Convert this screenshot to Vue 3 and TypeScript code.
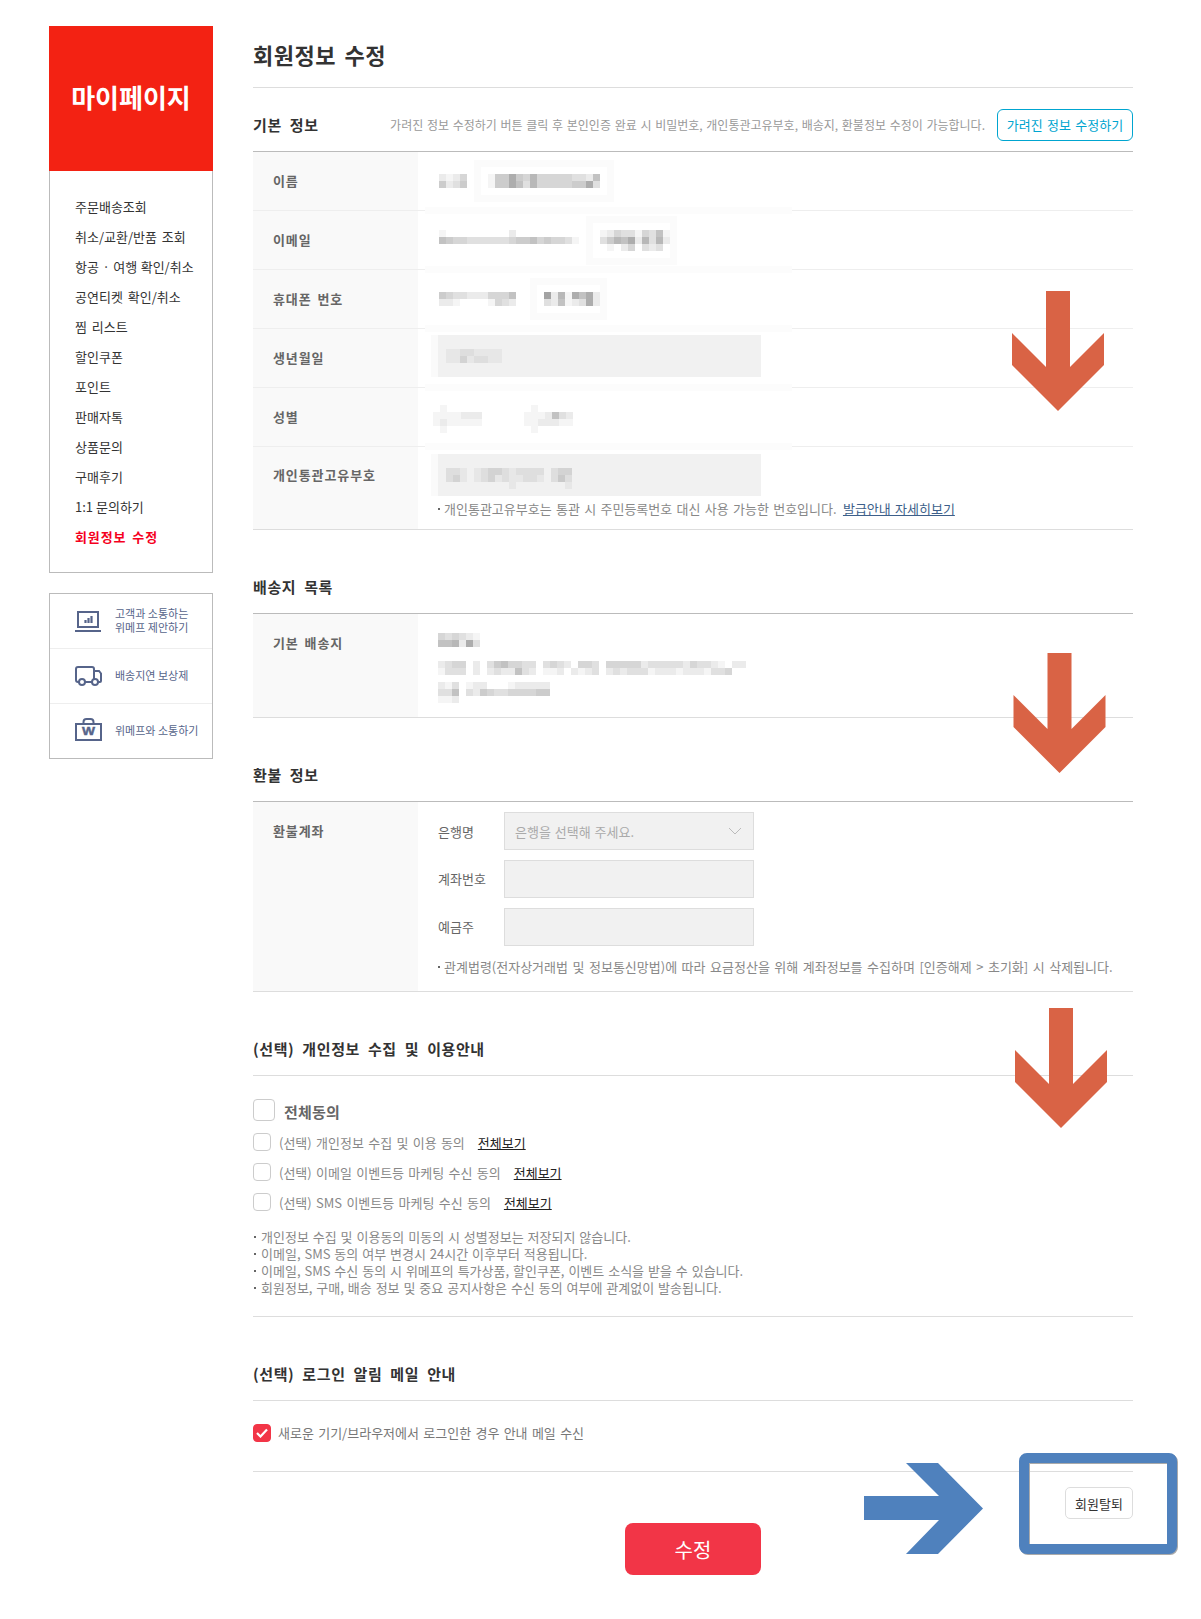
<template>
  <div class="page">
    <aside class="side">
      <div class="side-head">마이페이지</div>
      <ul class="side-menu">
        <li v-for="m in menu" :key="m" :class="{ on: m === '회원정보 수정' }">{{ m }}</li>
      </ul>
      <div class="side-links">
        <div class="side-link">
          <svg width="28" height="24" viewBox="0 0 28 24" fill="none" stroke="#56648a">
            <rect x="3" y="3" width="20" height="15" stroke-width="2" />
            <path d="M0 22h26" stroke-width="2" />
            <path d="M10.500 14v-3M13.500 14V9M16.500 14V7" stroke-width="2.200" />
          </svg>
          <span>고객과 소통하는<br />위메프 제안하기</span>
        </div>
        <div class="side-link">
          <svg width="28" height="24" viewBox="0 0 28 24" fill="none" stroke="#56648a" stroke-width="2">
            <path d="M4 18H3a2 2 0 0 1-2-2V5a2 2 0 0 1 2-2h14a2 2 0 0 1 2 2v10M10 18h7M20 7h4l2 2.500V17a1 1 0 0 1-1 1h-2" />
            <circle cx="7" cy="18" r="3" />
            <circle cx="20" cy="18" r="3" />
          </svg>
          <span>배송지연 보상제</span>
        </div>
        <div class="side-link">
          <svg width="28" height="26" viewBox="0 0 28 26" fill="none" stroke="#56648a" stroke-width="2">
            <rect x="1" y="6" width="25" height="16" />
            <path d="M8.500 5V4a3 3 0 0 1 3-3h4a3 3 0 0 1 3 3v1" />
            <text x="13.500" y="17" text-anchor="middle" textLength="13" lengthAdjust="spacingAndGlyphs" class="w-mark">W</text>
          </svg>
          <span>위메프와 소통하기</span>
        </div>
      </div>
    </aside>

    <main class="main">
      <h1 class="title">회원정보 수정</h1>

      <section class="first">
        <div class="sec-head">
          <h2>기본 정보</h2>
          <p class="sec-desc">가려진 정보 수정하기 버튼 클릭 후 본인인증 완료 시 비밀번호, 개인통관고유부호, 배송지, 환불정보 수정이 가능합니다.</p>
          <button class="btn-unmask">가려진 정보 수정하기</button>
        </div>
        <div class="table">
          <div class="row">
            <div class="th">이름</div>
            <div class="td masked gap-21">
              <span class="mosaic"><span v-for="(r, i) in masks.name1" :key="i" class="m-row"><i v-for="(c, j) in r" :key="j" :style="shade(c)"></i></span></span>
              <span class="halo"><span class="mosaic"><span v-for="(r, i) in masks.name2" :key="i" class="m-row"><i v-for="(c, j) in r" :key="j" :style="shade(c)"></i></span></span></span>
            </div>
          </div>
          <div class="row">
            <div class="th">이메일</div>
            <div class="td masked gap-21">
              <span class="mosaic lift"><span v-for="(r, i) in masks.email1" :key="i" class="m-row"><i v-for="(c, j) in r" :key="j" :style="shade(c)"></i></span></span>
              <span class="halo tight"><span class="mosaic"><span v-for="(r, i) in masks.email2" :key="i" class="m-row"><i v-for="(c, j) in r" :key="j" :style="shade(c)"></i></span></span></span>
            </div>
          </div>
          <div class="row">
            <div class="th">휴대폰 번호</div>
            <div class="td masked gap-28">
              <span class="mosaic"><span v-for="(r, i) in masks.phone1" :key="i" class="m-row"><i v-for="(c, j) in r" :key="j" :style="shade(c)"></i></span></span>
              <span class="halo tight"><span class="mosaic"><span v-for="(r, i) in masks.phone2" :key="i" class="m-row"><i v-for="(c, j) in r" :key="j" :style="shade(c)"></i></span></span></span>
            </div>
          </div>
          <div class="row">
            <div class="th">생년월일</div>
            <div class="td masked td-birth">
              <div class="fake-input">
                <span class="mosaic"><span v-for="(r, i) in masks.birth" :key="i" class="m-row"><i v-for="(c, j) in r" :key="j" :style="shade(c)"></i></span></span>
              </div>
            </div>
          </div>
          <div class="row">
            <div class="th">성별</div>
            <div class="td masked gap-42 td-gender">
              <span class="mosaic"><span v-for="(r, i) in masks.gender1" :key="i" class="m-row"><i v-for="(c, j) in r" :key="j" :style="shade(c)"></i></span></span>
              <span class="mosaic"><span v-for="(r, i) in masks.gender2" :key="i" class="m-row"><i v-for="(c, j) in r" :key="j" :style="shade(c)"></i></span></span>
            </div>
          </div>
          <div class="row row-customs">
            <div class="th th-customs">개인통관고유부호</div>
            <div class="td masked td-customs">
              <div class="fake-input">
                <span class="mosaic drop"><span v-for="(r, i) in masks.customs" :key="i" class="m-row"><i v-for="(c, j) in r" :key="j" :style="shade(c)"></i></span></span>
              </div>
              <p class="note">개인통관고유부호는 통관 시 주민등록번호 대신 사용 가능한 번호입니다. <a class="guide">발급안내 자세히보기</a></p>
            </div>
          </div>
        </div>
      </section>

      <section>
        <div class="sec-head"><h2>배송지 목록</h2></div>
        <div class="table">
          <div class="row row-addr">
            <div class="th th-top">기본 배송지</div>
            <div class="td td-addr">
              <span class="mosaic"><span v-for="(r, i) in masks.addr1" :key="i" class="m-row"><i v-for="(c, j) in r" :key="j" :style="shade(c)"></i></span></span>
              <span class="mosaic"><span v-for="(r, i) in masks.addr2" :key="i" class="m-row"><i v-for="(c, j) in r" :key="j" :style="shade(c)"></i></span></span>
              <span class="mosaic"><span v-for="(r, i) in masks.addr3" :key="i" class="m-row"><i v-for="(c, j) in r" :key="j" :style="shade(c)"></i></span></span>
            </div>
          </div>
        </div>
      </section>

      <section>
        <div class="sec-head"><h2>환불 정보</h2></div>
        <div class="table">
          <div class="row row-refund">
            <div class="th th-top th-refund">환불계좌</div>
            <div class="td td-refund">
              <div class="field">
                <label>은행명</label>
                <div class="box select">
                  <span>은행을 선택해 주세요.</span>
                  <svg width="14" height="8" viewBox="0 0 14 8" fill="none" stroke="#bbb"><path d="M1 1l6 6 6-6" /></svg>
                </div>
              </div>
              <div class="field"><label>계좌번호</label><div class="box"></div></div>
              <div class="field"><label>예금주</label><div class="box"></div></div>
              <p class="note refund-note">관계법령(전자상거래법 및 정보통신망법)에 따라 요금정산을 위해 계좌정보를 수집하며 [인증해제 &gt; 초기화] 시 삭제됩니다.</p>
            </div>
          </div>
        </div>
      </section>

      <section>
        <div class="sec-head soft"><h2>(선택) 개인정보 수집 및 이용안내</h2></div>
        <div class="agree">
          <div class="check-all"><span class="cb cb-lg"></span><b>전체동의</b></div>
          <div v-for="a in agrees" :key="a" class="check">
            <span class="cb"></span><span>{{ a }}</span><a>전체보기</a>
          </div>
          <ul class="bullets">
            <li v-for="b in bullets" :key="b">{{ b }}</li>
          </ul>
        </div>
      </section>

      <section>
        <div class="sec-head soft"><h2>(선택) 로그인 알림 메일 안내</h2></div>
        <div class="login-mail">
          <span class="cb cb-on">
            <svg width="12" height="10" viewBox="0 0 12 10" fill="none" stroke="#fff" stroke-width="2.200"><path d="M1 5l3.500 3.500L11 1.500" /></svg>
          </span>
          <span>새로운 기기/브라우저에서 로그인한 경우 안내 메일 수신</span>
        </div>
      </section>

      <div class="leave-row"><button class="btn-leave">회원탈퇴</button></div>
      <div class="submit-row"><button class="btn-submit">수정</button></div>
    </main>

    <!-- annotations drawn over the screenshot -->
    <svg class="marks" width="1201" height="1619" viewBox="0 0 1201 1619">
      <polygon v-for="x in downArrows" :key="x.y" :points="arrow(x.x, x.y)" fill="#d96345" />
      <polygon points="864,1496 939,1496 906,1463 938,1463 983,1508.500 938,1554 906,1554 939,1520 864,1520" fill="#4f81bd" />
      <rect class="frame" x="1024" y="1458" width="148" height="91" rx="3" fill="none" stroke="#4f81bd" stroke-width="10" />
    </svg>
  </div>
</template>

<script setup lang="ts">
const menu = [
  '주문배송조회', '취소/교환/반품 조회', '항공 · 여행 확인/취소', '공연티켓 확인/취소', '찜 리스트', '할인쿠폰',
  '포인트', '판매자톡', '상품문의', '구매후기', '1:1 문의하기', '회원정보 수정',
];

const agrees = [
  '(선택) 개인정보 수집 및 이용 동의',
  '(선택) 이메일 이벤트등 마케팅 수신 동의',
  '(선택) SMS 이벤트등 마케팅 수신 동의',
];

const bullets = [
  '개인정보 수집 및 이용동의 미동의 시 성별정보는 저장되지 않습니다.',
  '이메일, SMS 동의 여부 변경시 24시간 이후부터 적용됩니다.',
  '이메일, SMS 수신 동의 시 위메프의 특가상품, 할인쿠폰, 이벤트 소식을 받을 수 있습니다.',
  '회원정보, 구매, 배송 정보 및 중요 공지사항은 수신 동의 여부에 관계없이 발송됩니다.',
];

// pixelated personal data: one digit per 7px cell, higher is darker
const masks: Record<string, string[]> = {
  name1: ['2124', '5235'],
  name2: ['1558547444443326', '1558637444445583'],
  email1: ['1.........2.........', '65443333334556454431'],
  email2: ['1243314361', '3576827372', '.1.24.323.'],
  phone1: ['54332224446', '221....1432'],
  phone2: ['92718682', '32612382'],
  birth: ['11221111', '11312211'],
  gender1: ['.1.....', '1111222', '1211111', '.1.....'],
  gender2: ['.1.....', '1112632', '1122211', '.1.....'],
  customs: ['221.1233212222.233..', '231.1231211221.242..', '.........1.......1..'],
  addr1: ['434321', '667283'],
  addr2: [
    '2344.2.3564433.3432.443.44444233333243321.22',
    '1333.2.2322632.112.2123.232333122212221334..',
  ],
  addr3: ['213.122...122222', '336.325433444455', '112..............'],
};

function shade(c: string) {
  const d = Number(c);
  return { background: c === '.' ? 'transparent' : `rgba(0, 0, 0, ${d * 0.04})` };
}

const downArrows = [
  { x: 1058, y: 291 },
  { x: 1059.5, y: 653 },
  { x: 1061, y: 1008 },
];

function arrow(x: number, y: number) {
  const pts = [[-12, 0], [12, 0], [12, 76], [46, 42], [46, 74], [0, 120], [-46, 74], [-46, 42], [-12, 76]];
  return pts.map(([a, b]) => `${x + a},${y + b}`).join(' ');
}
</script>

<style>
html, body {
  margin: 0;
  background: #fff;
}
</style>

<style scoped>
.page {
  position: relative;
  display: flex;
  width: 1201px;
  height: 1619px;
  padding: 26px 0 0 49px;
  box-sizing: border-box;
  font-family: "Noto Sans CJK KR", "Noto Sans", sans-serif;
  font-size: 13px;
  word-spacing: 1.400px;
  color: #666;
  overflow: hidden;
}

.side {
  width: 164px;
  flex: none;
}

.side-head {
  height: 141px;
  padding-bottom: 4px;
  background: #f32213;
  color: #fff;
  font-size: 26px;
  font-weight: 700;
  display: flex;
  align-items: center;
  justify-content: center;
}

.side-menu {
  list-style: none;
  margin: 0;
  padding: 21px 0 21px 25px;
  height: 402px;
  box-sizing: border-box;
  border: 1px solid #bbb;
  border-top: 0;
}

.side-menu li {
  height: 30px;
  line-height: 30px;
  font-size: 13px;
  color: #333;
  word-spacing: 2px;
  white-space: nowrap;
}

.side-menu li:nth-child(3) {
  word-spacing: .6px;
}

.side-menu li:nth-child(11) {
  word-spacing: 0;
}

.side-menu li.on {
  color: #f5001e;
  font-weight: 700;
  letter-spacing: .9px;
  word-spacing: 2px;
}

.side-links {
  margin-top: 20px;
  border: 1px solid #bbb;
}

.side-link {
  height: 55px;
  box-sizing: border-box;
  display: flex;
  align-items: center;
  padding-left: 25px;
  gap: 12px;
  color: #56648a;
  font-size: 11px;
  line-height: 14px;
  word-spacing: 0;
  border-top: 1px solid #eee;
}

.side-link span {
  margin-top: -2px;
}

.side-link:first-child {
  border-top: 0;
  height: 54px;
}

.w-mark {
  font-family: "Liberation Sans", sans-serif;
  font-size: 11px;
  font-weight: 700;
  fill: #56648a;
  stroke: #56648a;
  stroke-width: .4;
}

.main {
  width: 880px;
  margin-left: 40px;
  flex: none;
}

.title {
  margin: 0;
  height: 61px;
  line-height: 56px;
  font-size: 22px;
  font-weight: 700;
  letter-spacing: .5px;
  word-spacing: 3px;
  color: #333;
  border-bottom: 1px solid #ddd;
}

section {
  margin-top: 31px;
}

section.first {
  margin-top: 11px;
}

.sec-head {
  height: 52px;
  display: flex;
  align-items: center;
  border-bottom: 1px solid #bbb;
  box-sizing: content-box;
}

.sec-head.soft {
  border-bottom-color: #ddd;
}

.sec-head h2 {
  margin: 0;
  padding-bottom: 2px;
  font-size: 15px;
  font-weight: 700;
  color: #333;
  letter-spacing: .6px;
  word-spacing: 4px;
  white-space: nowrap;
}

.sec-desc {
  margin: 0 12px 0 auto;
  padding-bottom: 2px;
  color: #999;
  font-size: 12px;
  word-spacing: 1px;
  white-space: nowrap;
}

.btn-unmask {
  width: 136px;
  height: 32px;
  padding: 0 0 2px;
  flex: none;
  background: #fff;
  border: 1px solid #00a5d0;
  border-radius: 6px;
  color: #00a5d0;
  font: inherit;
  font-size: 13px;
  word-spacing: 1.400px;
}

.row {
  display: flex;
  min-height: 58px;
  border-bottom: 1px solid #eee;
}

.row:last-child {
  border-bottom-color: #ddd;
}

.th {
  width: 165px;
  flex: none;
  padding: 0 0 2px 20px;
  box-sizing: border-box;
  background: #f9f9f9;
  display: flex;
  align-items: center;
  font-size: 13px;
  font-weight: 700;
  color: #666;
  letter-spacing: .9px;
  word-spacing: 2px;
}

.th-top,
.th-customs {
  align-items: flex-start;
  padding-top: 18px;
}

.th-top {
  padding-top: 19px;
}

.td {
  flex: 1;
  position: relative;
  display: flex;
  align-items: center;
  padding-left: 21px;
}

.masked::before {
  content: "";
  position: absolute;
  left: 7px;
  top: -4px;
  width: 367px;
  height: 7px;
  background: #fcfcfc;
}

.row:first-child .masked::before {
  display: none;
}

.gap-21 { gap: 21px; }
.gap-28 { gap: 28px; }
.gap-42 { gap: 42px; }

.mosaic {
  display: inline-flex;
  flex-direction: column;
  flex: none;
}

.mosaic.lift {
  margin-top: -6px;
}

.mosaic.drop {
  margin-top: 6px;
}

.m-row {
  display: flex;
  height: 7px;
}

.m-row i {
  width: 7px;
  height: 7px;
  flex: none;
}

.halo {
  display: inline-flex;
  padding: 7px;
  margin-left: -7px;
  outline: 7px solid #fbfbfb;
}

.halo.tight {
  padding-right: 0;
}

.td-birth {
  padding-bottom: 4px;
}

.td-gender {
  padding-left: 15px;
  padding-top: 4px;
}

.fake-input {
  width: 323px;
  height: 42px;
  margin-left: -1px;
  padding-left: 8px;
  box-sizing: border-box;
  background: #f1f1f1;
  box-shadow: -7px 0 0 #fafafa;
  display: flex;
  align-items: center;
}

.td-customs {
  flex-direction: column;
  align-items: flex-start;
  padding-top: 7px;
}

.row-customs {
  height: 82px;
}

.note {
  margin: 3px 0 0 -1px;
  color: #888;
  white-space: nowrap;
}

.note::before,
.bullets li::before {
  content: "";
  display: inline-block;
  width: 2px;
  height: 2px;
  margin-right: 4px;
  background: #666;
  vertical-align: 4px;
}

.guide {
  color: #3d5f8a;
  text-decoration: underline;
  margin-left: 2px;
}

.row-addr {
  height: 103px;
}

.td-addr {
  flex-direction: column;
  align-items: flex-start;
  justify-content: flex-start;
  padding: 19px 0 0 20px;
  gap: 14px;
}

.td-addr .mosaic:last-child {
  margin-top: -7px;
}

.row-refund {
  height: 189px;
}

.td-refund {
  flex-direction: column;
  align-items: flex-start;
  padding: 10px 0 0 20px;
}

.field {
  display: flex;
  align-items: center;
  height: 38px;
  margin-bottom: 10px;
}

.field label {
  width: 66px;
  color: #666;
}

.field + .field label {
  margin-top: -2px;
}

.box {
  width: 250px;
  height: 38px;
  box-sizing: border-box;
  background: #f1f1f1;
  border: 1px solid #ddd;
}

.select {
  display: flex;
  align-items: center;
  justify-content: space-between;
  padding: 0 11px 0 10px;
  color: #aaa;
  word-spacing: 1px;
}

.refund-note {
  margin: 1px 0 0;
  word-spacing: 1.600px;
}

.agree {
  height: 241px;
  box-sizing: border-box;
  padding-top: 23px;
  border-bottom: 1px solid #ddd;
}

.cb {
  width: 18px;
  height: 18px;
  flex: none;
  box-sizing: border-box;
  border: 1px solid #ccc;
  border-radius: 4px;
  display: inline-flex;
  align-items: center;
  justify-content: center;
}

.cb-lg {
  width: 22px;
  height: 22px;
}

.check-all {
  display: flex;
  align-items: center;
  gap: 9px;
  height: 22px;
  font-size: 15px;
  color: #666;
  margin-bottom: 12px;
}

.check-all b {
  padding-top: 3px;
  letter-spacing: .2px;
}

.check {
  display: flex;
  align-items: center;
  height: 18px;
  margin-bottom: 12px;
  color: #888;
  white-space: nowrap;
}

.check .cb {
  margin-right: 8px;
}

.check a {
  margin-left: 13px;
  color: #222;
  text-decoration: underline;
}

.bullets {
  list-style: none;
  margin: 17px 0 0;
  padding: 0;
  color: #888;
  word-spacing: 1px;
}

.bullets li {
  line-height: 17px;
  white-space: nowrap;
}

.bullets li::before {
  margin-left: 1px;
  margin-right: 5px;
}

.login-mail {
  height: 71px;
  box-sizing: border-box;
  padding-top: 23px;
  display: flex;
  align-items: flex-start;
  gap: 7px;
  color: #777;
  line-height: 18px;
  border-bottom: 1px solid #ddd;
}

.cb-on {
  background: #f23547;
  border-color: #f23547;
}

.leave-row {
  display: flex;
  justify-content: flex-end;
  margin-top: 15px;
}

.btn-leave {
  width: 68px;
  height: 32px;
  padding: 0;
  background: #fff;
  border: 1px solid #ddd;
  border-radius: 5px;
  font: inherit;
  color: #333;
}

.submit-row {
  display: flex;
  justify-content: center;
  margin-top: 4px;
}

.btn-submit {
  width: 136px;
  height: 52px;
  padding: 0;
  background: #f23547;
  border: 0;
  border-radius: 8px;
  color: #fff;
  font: inherit;
  font-size: 20px;
}

.marks {
  position: absolute;
  left: 0;
  top: 0;
  pointer-events: none;
}

.frame {
  filter: drop-shadow(1px 1px 0 #aaa);
}
</style>
